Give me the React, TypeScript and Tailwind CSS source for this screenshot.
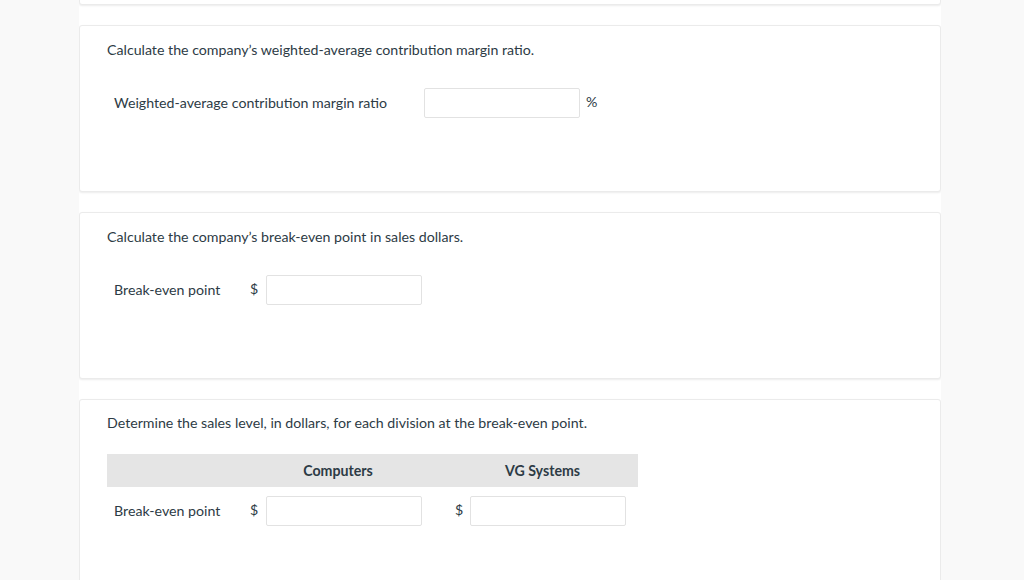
import React from "react";

const text = "text-[#2d3b45]";

function Card({ children, className = "" }: { children?: React.ReactNode; className?: string }) {
  return (
    <section
      className={`rounded-[3px] border border-[#ebebeb] bg-white shadow-[0_1px_2px_rgba(0,0,0,0.08)] ${className}`}
    >
      {children}
    </section>
  );
}

function Field({ className = "" }: { className?: string }) {
  return (
    <input
      type="text"
      className={`h-[30px] w-[156px] rounded-[2px] border border-[#e2e2e2] bg-white px-2 text-sm outline-none ${className}`}
    />
  );
}

export default function App() {
  return (
    <div
      className={`min-h-[580px] w-full bg-[#f9f9f9] text-[14.2px] ${text}`}
      style={{ fontFamily: "Lato, 'Open Sans', sans-serif" }}
    >
      <main className="ml-[79px] flex h-[580px] w-[862px] flex-col gap-[20px] overflow-hidden bg-white">
        {/* card above, mostly scrolled away */}
        <Card className="-mt-[161px] h-[166px] shrink-0" />

        <Card className="h-[167px] shrink-0 px-[27px] pt-[14px]">
          <p className="leading-[20px]">Calculate the company’s weighted-average contribution margin ratio.</p>
          <div className="mt-[28px] flex items-center">
            <span className="w-[317px] pl-[7px] leading-[20px]">Weighted-average contribution margin ratio</span>
            <Field />
            <span className="ml-[6px] -mt-[2px]">%</span>
          </div>
        </Card>

        <Card className="h-[167px] shrink-0 px-[27px] pt-[14px]">
          <p className="leading-[20px]">Calculate the company’s break-even point in sales dollars.</p>
          <div className="mt-[28px] flex items-center">
            <span className="w-[143px] pl-[7px] leading-[20px]">Break-even point</span>
            <span className="w-[16px] -mt-[2px]">$</span>
            <Field />
          </div>
        </Card>

        <Card className="h-[200px] shrink-0 px-[27px] pt-[13px]">
          <p className="leading-[20px]">Determine the sales level, in dollars, for each division at the break-even point.</p>
          <div className="mt-[21px] w-[531px]">
            <div className="flex h-[33px] items-center bg-[#e5e5e5] font-bold">
              <span className="w-[138px]" />
              <span className="w-[186px] text-center">Computers</span>
              <span className="w-[16px]" />
              <span className="w-[191px] text-center">VG Systems</span>
            </div>
            <div className="mt-[9px] flex items-center">
              <span className="w-[143px] pl-[7px] leading-[20px]">Break-even point</span>
              <span className="w-[16px] -mt-[2px]">$</span>
              <Field />
              <span className="ml-[33px] w-[15px] -mt-[2px]">$</span>
              <Field />
            </div>
          </div>
        </Card>
      </main>
    </div>
  );
}
